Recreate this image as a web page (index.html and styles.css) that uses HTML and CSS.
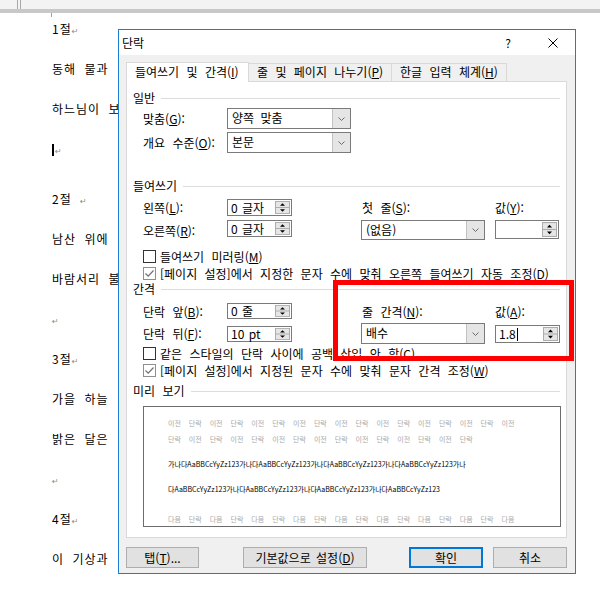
FILE: index.html
```html
<!DOCTYPE html>
<html lang="ko">
<head>
<meta charset="utf-8">
<title>단락</title>
<link rel="stylesheet" href="styles.css">
</head>
<body>
<div class="topbar"><span class="tb-mark tb-a"></span><span class="tb-mark tb-b"></span></div>
<div class="page">
  <div class="corner"></div>
  <p class="ln">1절<span class="pm">↵</span></p>
  <p class="ln">동해 물과</p>
  <p class="ln">하느님이 보</p>
  <p class="ln ln-gap"><span class="caret"></span><span class="pm">↵</span></p>
  <p class="ln">2절 <span class="pm">↵</span></p>
  <p class="ln">남산 위에</p>
  <p class="ln">바람서리 불</p>
  <p class="ln"><span class="pm">↵</span></p>
  <p class="ln">3절<span class="pm">↵</span></p>
  <p class="ln">가을 하늘</p>
  <p class="ln">밝은 달은</p>
  <p class="ln"><span class="pm">↵</span></p>
  <p class="ln">4절<span class="pm">↵</span></p>
  <p class="ln">이 기상과</p>
</div>

<div class="dialog">
  <div class="titlebar">
    <span class="title">단락</span>
    <span class="help">?</span>
    <svg class="close" width="10" height="10" viewBox="0 0 10 10"><path d="M0.5 0.5L9.5 9.5M9.5 0.5L0.5 9.5" stroke="#000" stroke-width="1" fill="none"/></svg>
  </div>
  <div class="dbody">
    <div class="tabs">
      <div class="tab tab-active">들여쓰기 및 간격(<u>I</u>)</div>
      <div class="tab tab-2">줄 및 페이지 나누기(<u>P</u>)</div>
      <div class="tab tab-3">한글 입력 체계(<u>H</u>)</div>
    </div>
    <div class="panel">
      <div class="hdr"><span>일반</span><i class="rule"></i></div>
      <div class="frow frow-first">
        <span class="flabel">맞춤(<u>G</u>):</span>
        <div class="combo"><span class="cval">양쪽 맞춤</span><span class="drop"><svg width="7" height="4" viewBox="0 0 7 4"><path d="M0.5 0.5L3.5 3.5L6.5 0.5" stroke="#6a6a6a" fill="none"/></svg></span></div>
      </div>
      <div class="frow">
        <span class="flabel">개요 수준(<u>O</u>):</span>
        <div class="combo"><span class="cval">본문</span><span class="drop"><svg width="7" height="4" viewBox="0 0 7 4"><path d="M0.5 0.5L3.5 3.5L6.5 0.5" stroke="#6a6a6a" fill="none"/></svg></span></div>
      </div>

      <div class="hdr hdr-indent"><span>들여쓰기</span><i class="rule"></i></div>
      <div class="grid grid-indent">
        <span class="flabel c1">왼쪽(<u>L</u>):</span>
        <div class="spin spin-l c2"><span class="sval">0 글자</span><svg class="arr" viewBox="0 0 15 14" preserveAspectRatio="none"><rect x="0.5" y="0.5" width="14" height="13" fill="#e6e6e6" stroke="#acacac"/><path d="M0 7H15" stroke="#acacac"/><path d="M5 5.2H10L7.5 2.5Z" fill="#000"/><path d="M5 8.8H10L7.5 11.5Z" fill="#000"/></svg></div>
        <span class="flabel c4">첫 줄(<u>S</u>):</span>
        <span class="flabel c6">값(<u>Y</u>):</span>
        <span class="flabel c1">오른쪽(<u>R</u>):</span>
        <div class="spin spin-l c2 top"><span class="sval">0 글자</span><svg class="arr" viewBox="0 0 15 14" preserveAspectRatio="none"><rect x="0.5" y="0.5" width="14" height="13" fill="#e6e6e6" stroke="#acacac"/><path d="M0 7H15" stroke="#acacac"/><path d="M5 5.2H10L7.5 2.5Z" fill="#000"/><path d="M5 8.8H10L7.5 11.5Z" fill="#000"/></svg></div>
        <div class="combo combo-s c4 top"><span class="cval">(없음)</span><span class="drop"><svg width="7" height="4" viewBox="0 0 7 4"><path d="M0.5 0.5L3.5 3.5L6.5 0.5" stroke="#6a6a6a" fill="none"/></svg></span></div>
        <div class="spin spin-r c6 top"><span class="sval"></span><svg class="arr" viewBox="0 0 15 14" preserveAspectRatio="none"><rect x="0.5" y="0.5" width="14" height="13" fill="#e6e6e6" stroke="#acacac"/><path d="M0 7H15" stroke="#acacac"/><path d="M5 5.2H10L7.5 2.5Z" fill="#000"/><path d="M5 8.8H10L7.5 11.5Z" fill="#000"/></svg></div>
      </div>
      <div class="check check-first"><span class="cb"></span>들여쓰기 미러링(<u>M</u>)</div>
      <div class="check"><span class="cb cb-on"><svg width="11" height="11" viewBox="0 0 11 11"><path d="M1.5 5.5L4.2 8.2L9.5 2.5" stroke="#707070" stroke-width="1.2" fill="none"/></svg></span>[페이지 설정]에서 지정한 문자 수에 맞춰 오른쪽 들여쓰기 자동 조정(<u>D</u>)</div>

      <div class="hdr hdr-spacing"><span>간격</span><i class="rule"></i></div>
      <div class="grid grid-spacing">
        <span class="flabel c1">단락 앞(<u>B</u>):</span>
        <div class="spin spin-s c2"><span class="sval">0 줄</span><svg class="arr" viewBox="0 0 15 14" preserveAspectRatio="none"><rect x="0.5" y="0.5" width="14" height="13" fill="#e6e6e6" stroke="#acacac"/><path d="M0 7H15" stroke="#acacac"/><path d="M5 5.2H10L7.5 2.5Z" fill="#000"/><path d="M5 8.8H10L7.5 11.5Z" fill="#000"/></svg></div>
        <span class="flabel c4">줄 간격(<u>N</u>):</span>
        <span class="flabel c6">값(<u>A</u>):</span>
        <span class="flabel c1">단락 뒤(<u>F</u>):</span>
        <div class="spin spin-s c2"><span class="sval">10 pt</span><svg class="arr" viewBox="0 0 15 14" preserveAspectRatio="none"><rect x="0.5" y="0.5" width="14" height="13" fill="#e6e6e6" stroke="#acacac"/><path d="M0 7H15" stroke="#acacac"/><path d="M5 5.2H10L7.5 2.5Z" fill="#000"/><path d="M5 8.8H10L7.5 11.5Z" fill="#000"/></svg></div>
        <div class="combo c4"><span class="cval">배수</span><span class="drop"><svg width="7" height="4" viewBox="0 0 7 4"><path d="M0.5 0.5L3.5 3.5L6.5 0.5" stroke="#6a6a6a" fill="none"/></svg></span></div>
        <div class="spin spin-v c6"><span class="sval">1.8<span class="tcaret"></span></span><svg class="arr" viewBox="0 0 15 14" preserveAspectRatio="none"><rect x="0.5" y="0.5" width="14" height="13" fill="#e6e6e6" stroke="#acacac"/><path d="M0 7H15" stroke="#acacac"/><path d="M5 5.2H10L7.5 2.5Z" fill="#000"/><path d="M5 8.8H10L7.5 11.5Z" fill="#000"/></svg></div>
      </div>
      <div class="check check-gap"><span class="cb"></span>같은 스타일의 단락 사이에 공백 삽입 안 함(<u>C</u>)</div>
      <div class="check"><span class="cb cb-on"><svg width="11" height="11" viewBox="0 0 11 11"><path d="M1.5 5.5L4.2 8.2L9.5 2.5" stroke="#707070" stroke-width="1.2" fill="none"/></svg></span>[페이지 설정]에서 지정된 문자 수에 맞춰 문자 간격 조정(<u>W</u>)</div>

      <div class="hdr hdr-preview"><span>미리 보기</span><i class="rule"></i></div>
      <div class="preview">
        <p class="pv pv-prev">이전 단락 이전 단락 이전 단락 이전 단락 이전 단락 이전 단락 이전 단락 이전 단락 이전</p>
        <p class="pv pv-prev">단락 이전 단락 이전 단락 이전 단락 이전 단락 이전 단락 이전 단락 이전 단락</p>
        <p class="pv pv-cur">가나다AaBBCcYyZz123가나다AaBBCcYyZz123가나다AaBBCcYyZz123가나다AaBBCcYyZz123가나</p>
        <p class="pv pv-cur">다AaBBCcYyZz123가나다AaBBCcYyZz123가나다AaBBCcYyZz123가나다AaBBCcYyZz123</p>
        <p class="pv pv-next">다음 단락 다음 단락 다음 단락 다음 단락 다음 단락 다음 단락 다음 단락 다음 단락 다음</p>
      </div>
    </div>
    <div class="btns">
      <div class="btn btn-tab">탭(<u>T</u>)...</div>
      <div class="btn btn-default">기본값으로 설정(<u>D</u>)</div>
      <div class="btn btn-ok">확인</div>
      <div class="btn btn-cancel">취소</div>
    </div>
  </div>
</div>

<div class="highlight"></div>
</body>
</html>
```

FILE: styles.css
```css
* { box-sizing: border-box; }
html, body { margin: 0; padding: 0; }
body {
  width: 600px;
  height: 589px;
  overflow: hidden;
  position: relative;
  background: #fff;
  color: #000;
  font-family: "Noto Sans CJK KR", "Noto Sans", sans-serif;
}

/* ---------- document behind ---------- */
.topbar {
  height: 13px;
  background: #f3f3f3;
  border-bottom: 4px solid #c8c8c8;
  display: flex;
}
.tb-mark { width: 1px; height: 9px; background: #a8a8a8; }
.tb-a { margin-left: 17px; }
.tb-b { margin-left: 2px; }

.page { padding-left: 52px; }
.corner {
  width: 1px;
  height: 4px;
  background: #a0a0a0;
  margin-left: -1px;
  margin-bottom: 2px;
}
.ln {
  margin: 0 0 20px;
  height: 20px;
  line-height: 20px;
  font-size: 12px;
  letter-spacing: 1px;
  word-spacing: 4px;
  white-space: nowrap;
}
.ln-gap { margin-bottom: 30px; }
.pm {
  font-family: "DejaVu Sans", sans-serif;
  font-size: 8px;
  color: #8a8a8a;
  letter-spacing: 0;
}
.caret {
  display: inline-block;
  width: 2px;
  height: 12px;
  background: #000;
  vertical-align: -2px;
  margin-right: 1px;
}

/* ---------- dialog ---------- */
.dialog {
  position: absolute;
  left: 118px;
  top: 29px;
  width: 458px;
  height: 545px;
  border: 1px solid #1a7fd4;
  background: #f0f0f0;
  font-size: 12px;
  word-spacing: 4px;
  display: flex;
  flex-direction: column;
}
.titlebar {
  height: 25px;
  flex: none;
  background: #fff;
  display: flex;
  align-items: center;
  padding-left: 3px;
}
.title { flex: 1; }
.help { margin-right: 37px; }
.close { margin-right: 17px; }

.dbody {
  flex: 1;
  padding: 7px 8px 0 7px;
  display: flex;
  flex-direction: column;
}

.tabs {
  display: flex;
  align-items: flex-end;
  height: 19px;
  position: relative;
  z-index: 1;
}
.tab {
  height: 18px;
  line-height: 16px;
  padding-left: 8px;
  border: 1px solid #d9d9d9;
  border-left: none;
  border-bottom: none;
  background: #f0f0f0;
  white-space: nowrap;
}
.tab-active {
  width: 123px;
  height: 20px;
  line-height: 18px;
  margin-bottom: -1px;
  border-left: 1px solid #d9d9d9;
  background: #fff;
}
.tab-2 { width: 143px; }
.tab-3 { width: 115px; }

.panel {
  height: 457px;
  flex: none;
  border: 1px solid #d9d9d9;
  background: #fff;
  padding: 8px 6px 0 6px;
}

.hdr {
  display: flex;
  align-items: center;
  height: 16px;
  line-height: 16px;
}
.hdr .rule {
  flex: 1;
  height: 1px;
  background: #dcdcdc;
  margin-left: 6px;
}
.hdr-indent { margin-top: 25px; }
.hdr-spacing { margin-top: -1px; }
.hdr-preview { margin-top: 4px; }

.frow {
  display: flex;
  align-items: center;
  height: 21px;
  margin-top: 3px;
  padding-left: 10px;
}
.frow-first { margin-top: 2px; }
.flabel { white-space: nowrap; }
.frow .flabel { width: 84px; flex: none; }

.combo {
  width: 124px;
  height: 21px;
  border: 1px solid #7a7a7a;
  background: #fff;
  display: flex;
}
.combo-s { height: 20px; }
.cval { flex: 1; padding-left: 4px; line-height: 18px; white-space: nowrap; word-spacing: 3px; }
.drop {
  width: 18px;
  background: #e5e5e5;
  border-left: 1px solid #c2c2c2;
  display: flex;
  align-items: center;
  justify-content: center;
}

.grid {
  display: grid;
  grid-template-columns: 84px 65px 69px 124px 10px 65px;
  align-items: center;
  padding-left: 10px;
  row-gap: 4px;
}
.grid-indent { margin-top: 5px; grid-template-rows: 17px 20px; }
.grid-spacing { margin-top: 6px; grid-template-rows: 16px 21px; }
.c1 { grid-column: 1; }
.c2 { grid-column: 2; }
.c4 { grid-column: 4; }
.c6 { grid-column: 6; }
.c4.flabel { padding-left: 1px; }
.top { align-self: start; }

.spin {
  border: 1px solid #7a7a7a;
  background: #fff;
  display: flex;
  align-items: center;
}
.spin-l { width: 65px; height: 17px; }
.spin-s { width: 65px; height: 16px; }
.spin-r { width: 64px; height: 19px; }
.spin-v { width: 65px; height: 18px; }
.sval { flex: 1; padding-left: 3px; white-space: nowrap; line-height: 14px; word-spacing: 1px; }
.arr { width: 15px; align-self: stretch; height: auto; margin: 1px 1px 1px 0; display: block; }
.tcaret {
  display: inline-block;
  width: 1px;
  height: 13px;
  background: #000;
  vertical-align: -2px;
  margin-left: 1px;
}

.check {
  display: flex;
  align-items: center;
  height: 17px;
  padding-left: 10px;
  white-space: nowrap;
}
.check-first { margin-top: 8px; }
.check-gap { margin-top: 1px; }
.cb {
  width: 13px;
  height: 13px;
  flex: none;
  border: 1px solid #333;
  background: #fff;
  margin-right: 4px;
  display: flex;
  align-items: center;
  justify-content: center;
}
.cb-on { border-color: #8f8f8f; }

.preview {
  margin: 7px 0 0 10px;
  width: 418px;
  height: 121px;
  border: 1px solid #6d6d6d;
  background: #fff;
  overflow: hidden;
  padding: 8px 0 0 24px;
}
.pv {
  margin: 0;
  height: 16px;
  line-height: 16px;
  font-size: 7px;
  white-space: nowrap;
  word-spacing: 6px;
}
.pv-prev, .pv-next { color: #a9a9a9; }
.pv-cur { color: #000; margin-top: 9px; word-spacing: 0; }
.pv-next { margin-top: 14px; }

.btns {
  display: flex;
  margin-top: 9px;
}
.btn {
  height: 21px;
  border: 1px solid #adadad;
  background: #e1e1e1;
  display: flex;
  align-items: center;
  justify-content: center;
  white-space: nowrap;
  word-spacing: 2px;
}
.btn-tab { width: 73px; }
.btn-default { width: 124px; margin-left: 44px; }
.btn-ok { width: 74px; margin-left: auto; border: 2px solid #0078d7; }
.btn-cancel { width: 74px; margin-left: 10px; }

/* annotation overlay */
.highlight {
  position: absolute;
  left: 333px;
  top: 280px;
  width: 241px;
  height: 81px;
  border: 5px solid #ff0000;
}
```
